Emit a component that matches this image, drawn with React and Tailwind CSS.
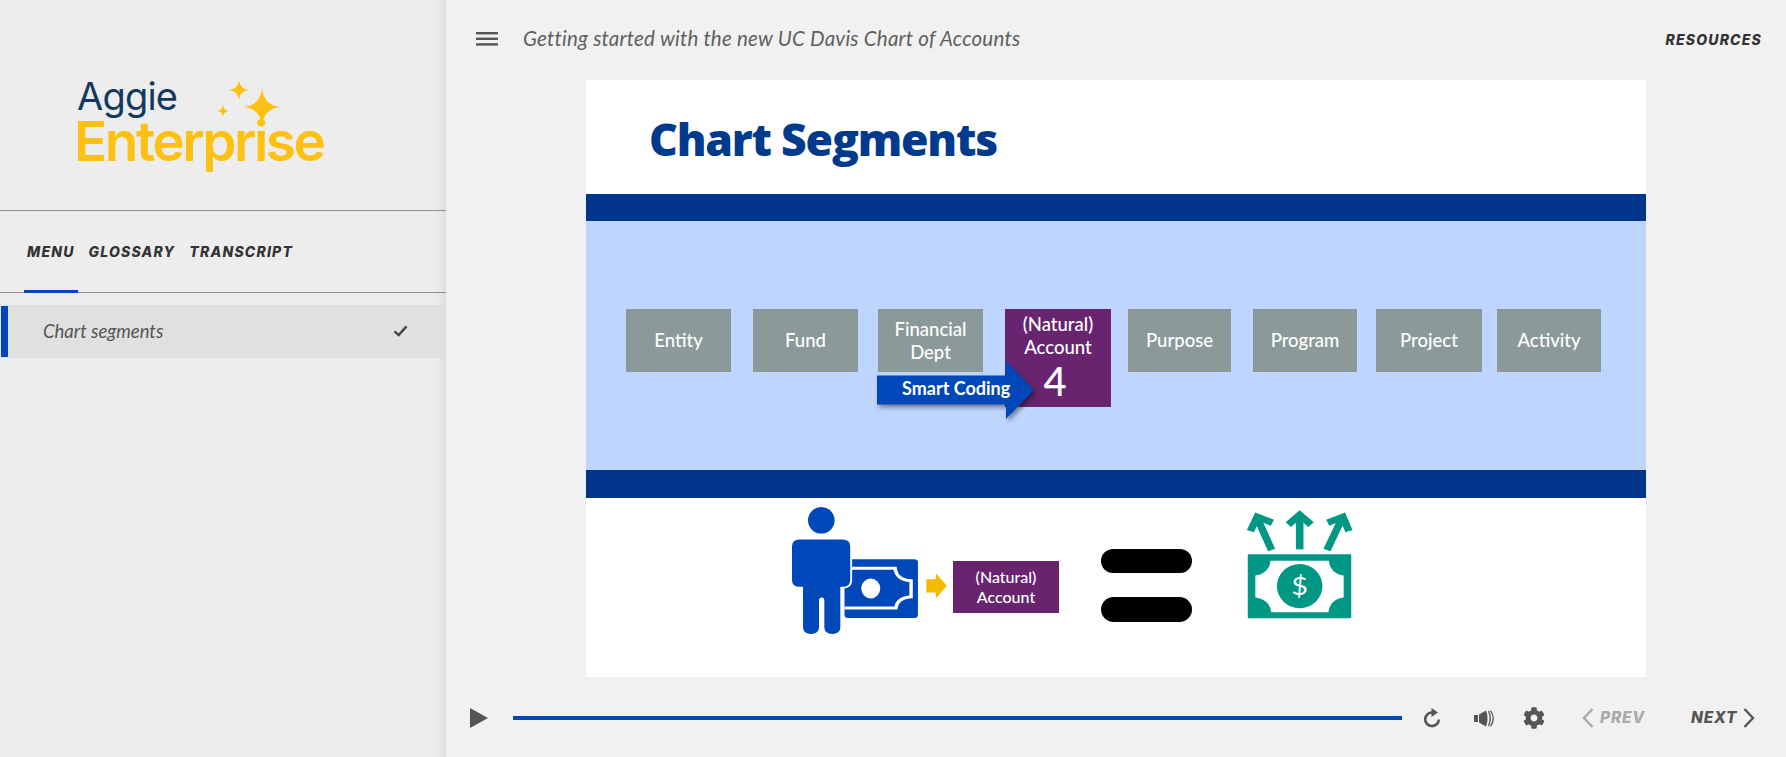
import React from 'react';
import { FaCog } from 'react-icons/fa';

const segments = [
    { label: <>Entity</>, ml: 'ml-[40px]', w: 'w-[105px]' },
    { label: <>Fund</>, ml: 'ml-[22px]', w: 'w-[105px]' },
    { label: <>Financial<br />Dept</>, ml: 'ml-[20px]', w: 'w-[105px]' },
];

const segmentsAfter = [
    { label: 'Purpose', ml: 'ml-[17px]', w: 'w-[103px]' },
    { label: 'Program', ml: 'ml-[22px]', w: 'w-[104px]' },
    { label: 'Project', ml: 'ml-[19px]', w: 'w-[106px]' },
    { label: 'Activity', ml: 'ml-[15px]', w: 'w-[104px]' },
];

const Star = ({ cx, cy, r, t }) => (
    <path d={`M${cx} ${cy - r}Q${cx + t * 0.3} ${cy - t * 0.3} ${cx + r} ${cy}Q${cx + t * 0.3} ${cy + t * 0.3} ${cx} ${cy + r}Q${cx - t * 0.3} ${cy + t * 0.3} ${cx - r} ${cy}Q${cx - t * 0.3} ${cy - t * 0.3} ${cx} ${cy - r}Z`} fill="#ffc014" />
);

const PersonWithBill = () => (
    <svg viewBox="57 48 410 385" preserveAspectRatio="none" className="w-[156px] h-[128px] shrink-0">
        {/* bill */}
        <rect x="195" y="205" width="193" height="177" rx="10" fill="#0047ba" />
        <path d="M204 232H328C330 258 345 268 370 270V318C345 320 332 332 330 352H195" fill="none" stroke="#fff" strokeWidth="9" />
        <ellipse cx="264" cy="293" rx="25" ry="30" fill="#fff" />
        {/* person */}
        <path d="M77 146H190Q210 146 210 166V268Q210 288 190 288H184V410Q184 430 163 430Q142 430 142 410V330Q142 320 135 320Q128 320 128 330V410Q128 430 107 430Q86 430 86 410V288H77Q57 288 57 268V166Q57 146 77 146Z" fill="#0047ba" stroke="#fff" strokeWidth="10" paintOrder="stroke" />
        <ellipse cx="134" cy="88" rx="35" ry="40" fill="#0047ba" />
        {/* yellow arrow */}
        <path d="M410 265H435V247L464 285L435 323V305H410Z" fill="#f4b900" />
    </svg>
);

const MoneyUp = () => (
    <svg viewBox="1245 48 277 338" preserveAspectRatio="none" className="w-[105px] h-[110px] shrink-0">
        <g fill="none" stroke="#009784" strokeWidth="20">
            <path d="M1384 172V66" />
            <path d="M1354 96L1384 66L1414 96" />
            <path d="M1310 174L1272 76" />
            <path d="M1254 116L1272 72L1312 90" />
            <path d="M1456 174L1496 76" />
            <path d="M1458 90L1498 72L1514 116" />
        </g>
        <rect x="1247" y="187" width="273" height="197" rx="4" fill="#009784" />
        <path d="M1307 207H1461C1463 232 1478 250 1500 252V320C1478 322 1462 340 1460 365H1309C1307 340 1290 322 1267 320V252C1290 250 1305 232 1307 207Z" fill="#fff" />
        <ellipse cx="1384" cy="285" rx="60" ry="68" fill="#009784" />
        <text x="1384" y="312" textAnchor="middle" fontSize="76" fill="#fff" fontFamily="Lato, sans-serif">$</text>
    </svg>
);

const Slide = () => (
    <div className="w-[1060px] h-[597px] ml-[140px] bg-white flex flex-col font-['Lato',sans-serif] shrink-0">
        <div className="h-[114px] pl-[63px] pt-[29px] shrink-0">
            <h1 className="text-[44.5px] leading-[60px] font-extrabold text-[#003a8c] font-['Open_Sans',sans-serif] tracking-[-1.2px]">Chart Segments</h1>
        </div>
        <div className="h-[27px] bg-[#00358b] shrink-0" />
        <div className="h-[249px] bg-[#bed5fe] shrink-0 flex items-start pt-[88px] relative text-[18.5px] leading-[23px] font-medium text-white text-center">
            {segments.map((s, i) => (
                <div key={i} className={`${s.ml} ${s.w} shrink-0 h-[63px] bg-[#8b9998] flex items-center justify-center`}>
                    <span>{s.label}</span>
                </div>
            ))}
            <div className="ml-[22px] w-[106px] shrink-0 h-[98px] bg-[#69246f] flex flex-col items-center pt-[4px]">
                <span>(Natural)<br />Account</span>
                <span className="text-[40px] leading-[44px] -ml-[6px]">4</span>
            </div>
            {segmentsAfter.map((s, i) => (
                <div key={i} className={`${s.ml} ${s.w} shrink-0 h-[63px] bg-[#8b9998] flex items-center justify-center`}>
                    <span>{s.label}</span>
                </div>
            ))}
            {/* Smart Coding arrow sits over the boxes */}
            <svg viewBox="0 0 157 58" className="absolute left-[291px] top-[140px] w-[157px] h-[58px] drop-shadow-[2px_3px_2px_rgba(0,0,0,0.4)]">
                <path d="M0 14.5H129V0L157 29L129 58V43.5H0Z" fill="#0047ba" />
            </svg>
            <span className="absolute left-[316px] top-[156px] text-[18px] font-bold whitespace-nowrap">Smart Coding</span>
        </div>
        <div className="h-[28px] bg-[#00358b] shrink-0" />
        <div className="flex items-start pl-[206px] pt-[9px] grow">
            <PersonWithBill />
            <div className="ml-[5px] mt-[54px] w-[106px] h-[52px] bg-[#69246f] text-white text-[16px] leading-[20px] font-medium text-center flex items-center justify-center shrink-0">
                <span>(Natural)<br />Account</span>
            </div>
            <div className="ml-[42px] mt-[42px] w-[91px] flex flex-col gap-[24px] shrink-0">
                <div className="h-[24px] rounded-full bg-black" />
                <div className="h-[25px] rounded-full bg-black" />
            </div>
            <div className="ml-[55px] mt-[2px]">
                <MoneyUp />
            </div>
        </div>
    </div>
);

const App = () => {
    return (
        <div className="w-full h-[757px] flex overflow-hidden bg-[#f1f1f1] font-['Lato',sans-serif]">
            {/* Sidebar */}
            <aside className="w-[446px] shrink-0 h-full bg-[#ededed] flex flex-col shadow-[inset_-12px_0_10px_-8px_rgba(0,0,0,0.08)]">
                <div className="h-[211px] shrink-0 border-b-[1px] border-[#8f8f8f] pl-[74px] pt-[76px] relative">
                    <div className="text-[38px] leading-[40px] font-normal text-[#14395f] font-['Inter',sans-serif] tracking-[-0.8px] ml-[3px]">Aggie</div>
                    <div className="text-[55px] leading-[50px] font-semibold text-[#ffc014] font-['Inter',sans-serif] tracking-[-2.5px]">Enterprise</div>
                    <svg viewBox="0 0 70 50" className="absolute left-[215px] top-[78px] w-[70px] h-[50px]">
                        <Star cx={24} cy={12} r={10} t={3} />
                        <Star cx={47} cy={29} r={19} t={5} />
                        <Star cx={8} cy={33} r={6} t={2} />
                    </svg>
                </div>
                <div className="h-[82px] shrink-0 border-b-[1px] border-[#8f8f8f] flex items-start pt-[32px] pl-[27px] gap-[14px] text-[14px] leading-[18px] font-extrabold italic tracking-[1.2px] text-[#333] relative font-['Inter',sans-serif]">
                    <span>MENU</span>
                    <span>GLOSSARY</span>
                    <span>TRANSCRIPT</span>
                    <div className="absolute left-[24px] bottom-[-1px] w-[54px] h-[3px] bg-[#0047ba]" />
                </div>
                <div className="mt-[12px] h-[53px] w-[443px] bg-[#e0e0e0] flex items-center justify-between pl-[1px] pr-[35px]">
                    <div className="flex items-center h-full">
                        <div className="w-[7px] h-[51px] bg-[#0047ba]" />
                        <span className="ml-[35px] mt-[1px] text-[18.5px] italic text-[#555]">Chart segments</span>
                    </div>
                    <svg viewBox="0 0 16 13" className="w-[15px] h-[12px] -mt-[2px]">
                        <path d="M1.5 7L6 11L14.5 1.5" fill="none" stroke="#444" strokeWidth="2.6" />
                    </svg>
                </div>
            </aside>

            {/* Main */}
            <main className="grow h-full flex flex-col min-w-0">
                <header className="h-[80px] shrink-0 flex items-start pt-[25px] pl-[30px] pr-[24px]">
                    <svg viewBox="0 0 22 14" className="w-[22px] h-[14px] mt-[7px] shrink-0">
                        <rect y="0" width="22" height="2.4" fill="#555" />
                        <rect y="5.6" width="22" height="2.4" fill="#555" />
                        <rect y="11.2" width="22" height="2.4" fill="#555" />
                    </svg>
                    <span className="ml-[25px] text-[20.5px] leading-[26px] italic tracking-[0.22px] text-[#5f5f5f]">Getting started with the new UC Davis Chart of Accounts</span>
                    <span className="ml-auto mt-[6px] text-[14px] leading-[18px] font-extrabold italic tracking-[1.2px] text-[#333] font-['Inter',sans-serif]">RESOURCES</span>
                </header>

                <Slide />

                {/* Player controls */}
                <div className="grow flex items-center pl-[24px] pt-[2px] text-[#555]">
                    <svg viewBox="0 0 18 20" className="w-[18px] h-[20px] shrink-0">
                        <path d="M0 0L18 10L0 20Z" fill="#555" />
                    </svg>
                    <div className="ml-[25px] w-[889px] h-[4px] bg-[#0047ba] shrink-0" />
                    <svg viewBox="0 0 18 20" className="ml-[21px] w-[18px] h-[20px] shrink-0">
                        <path d="M9.5 4.5A6.8 6.8 0 1 0 15.8 11.5" fill="none" stroke="#555" strokeWidth="2.6" />
                        <path d="M8.5 0L15 4.5L8.5 9Z" fill="#555" />
                    </svg>
                    <svg viewBox="0 0 21 17" className="ml-[33px] w-[21px] h-[17px] shrink-0">
                        <path d="M0 5H4V12H0Z" fill="#555" />
                        <path d="M5 4.5L12 0.5Q15 8.5 12 16.5L5 12.5Z" fill="#555" />
                        <path d="M14.5 1Q18 8.5 14.5 16" fill="none" stroke="#555" strokeWidth="1.3" />
                        <path d="M16.5 0.5Q22 8.5 16.5 16.5" fill="none" stroke="#555" strokeWidth="1.3" />
                    </svg>
                    <FaCog className="ml-[28px] w-[22px] h-[22px] shrink-0" />
                    <svg viewBox="0 0 12 20" className="ml-[37px] w-[12px] h-[20px] shrink-0">
                        <path d="M10.5 1L2 10L10.5 19" fill="none" stroke="#aaa" strokeWidth="2.4" />
                    </svg>
                    <span className="ml-[6px] text-[15.5px] leading-[20px] font-extrabold italic tracking-[0.8px] text-[#aaa] font-['Inter',sans-serif]">PREV</span>
                    <span className="ml-[46px] text-[15.5px] leading-[20px] font-extrabold italic tracking-[0.8px] text-[#555] font-['Inter',sans-serif]">NEXT</span>
                    <svg viewBox="0 0 12 20" className="ml-[6px] w-[12px] h-[20px] shrink-0">
                        <path d="M1.5 1L10 10L1.5 19" fill="none" stroke="#555" strokeWidth="2.4" />
                    </svg>
                </div>
            </main>
        </div>
    );
};

export default App;
